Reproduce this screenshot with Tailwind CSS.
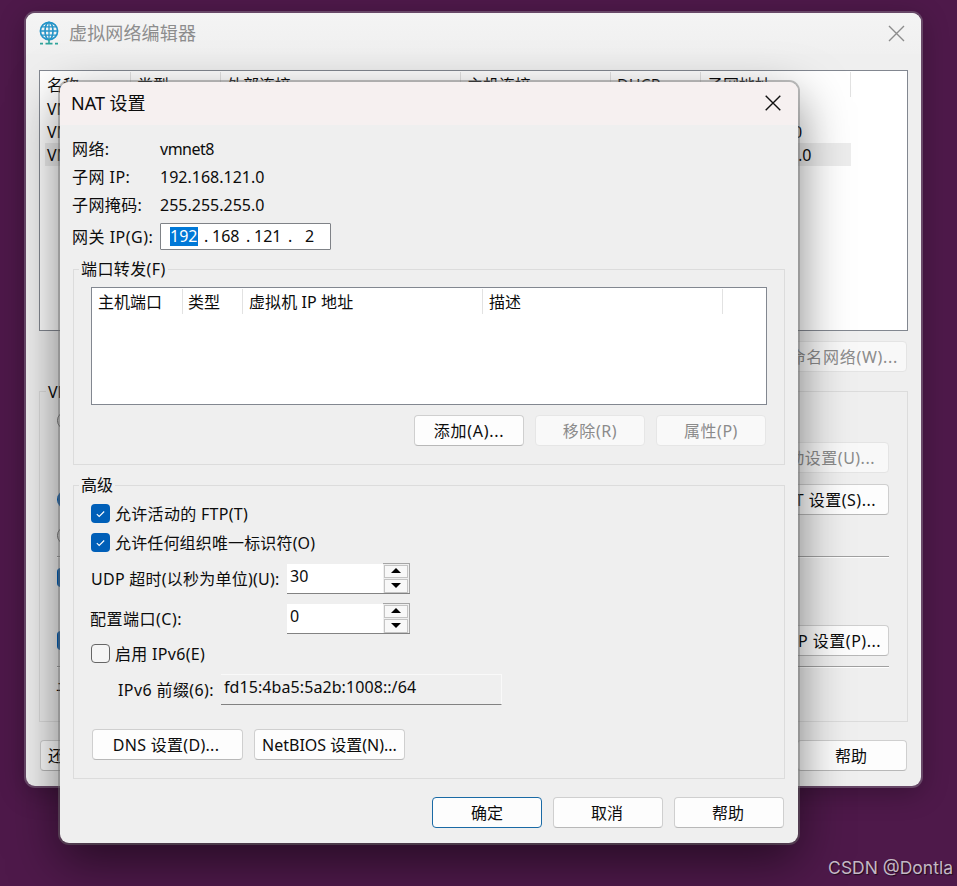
<!DOCTYPE html>
<html lang="zh-CN">
<head>
<meta charset="utf-8">
<title>虚拟网络编辑器</title>
<script src="https://cdn.jsdelivr.net/npm/@tailwindcss/browser@4"></script>
</head>
<body class="relative h-[886px] w-[957px] overflow-hidden bg-[#4e194a] font-['Noto_Sans','Noto_Sans_CJK_SC',sans-serif] text-[16px] leading-[20px] whitespace-nowrap text-[#0c0c0c]">

<!-- Editor window -->
<div class="absolute left-[26px] top-[13px] flex h-[773px] w-[895px] flex-col overflow-hidden rounded-[9px] bg-[#efefef] shadow-[0_0_0_2px_#684868,0_6px_28px_rgba(0,0,0,0.3)]">
  <header class="flex h-[41px] items-center bg-linear-to-b from-[#f4f4f4] to-[#f0f0f0] pl-[13px] pr-[16px]">
    <svg class="-mt-[2px] h-[24px] w-[20px] shrink-0" viewBox="0 0 20 24" fill="none" stroke="#2494c8" stroke-width="1.7">
      <circle cx="10" cy="10" r="8.6"/>
      <ellipse cx="10" cy="10" rx="4" ry="8.6"/>
      <path d="M10 1.8v16.4M1.8 10h16.4M3 5.8h14M3 14.2h14" stroke-width="1.3"/>
      <path d="M10 18v4M6.5 22.6h7M1 22.6h3M16 22.6h3" stroke="#2fa39a" stroke-width="1.6"/>
    </svg>
    <h1 class="ml-[10px] -mt-px text-[18px] tracking-[0.15px] text-[#8d8d8d]">虚拟网络编辑器</h1>
    <svg class="ml-auto h-[17px] w-[17px]" viewBox="0 0 17 17" stroke="#8c8c8c" stroke-width="1.4"><path d="M1 1l15 15M16 1L1 16"/></svg>
  </header>

  <div class="ml-[13px] mt-[16px] h-[261px] w-[869px] border border-[#828790] bg-white pt-px">
    <div class="flex h-[25px] leading-[26px]">
      <div class="w-[91px] border-r border-[#e2e2e2] pl-[7px]">名称</div>
      <div class="w-[90px] border-r border-[#e2e2e2] pl-[6px]">类型</div>
      <div class="w-[240px] border-r border-[#e2e2e2] pl-[6px]">外部连接</div>
      <div class="w-[150px] border-r border-[#e2e2e2] pl-[6px]">主机连接</div>
      <div class="w-[90px] border-r border-[#e2e2e2] pl-[6px]">DHCP</div>
      <div class="w-[150px] border-r border-[#e2e2e2] pl-[6px]">子网地址</div>
    </div>
    <div class="ml-[5px] w-[806px] leading-[25px]">
      <div class="flex h-[23px] pl-[2px]"><span class="w-[660px]">VMnet0</span><span>-</span></div>
      <div class="flex h-[23px] pl-[2px]"><span class="w-[660px]">VMnet1</span><span>192.168.80.0</span></div>
      <div class="flex h-[23px] bg-[#ededed] pl-[2px]"><span class="w-[660px]">VMnet8</span><span>192.168.121.0</span></div>
    </div>
  </div>

  <div class="mt-[10px] flex justify-end pr-[14px]">
    <button class="h-[31px] w-[151px] rounded-[4px] border border-[#e4e4e4] bg-[#f8f8f8] pl-[8px] tracking-[0.7px] text-[#8b8b8b]">重命名网络(W)...</button>
  </div>

  <fieldset class="ml-[13px] mt-[9px] h-[341px] w-[869px] border border-[#dcdcdc] pl-[17px] pr-[18px]">
    <legend class="-ml-[11px] h-[20px] px-[2px] leading-[22px]">VMnet 信息</legend>
    <div class="mt-[10px] flex h-[19px] items-center gap-1"><i class="h-[19px] w-[19px] rounded-full border border-[#757575] bg-[#f3f3f3]"></i>桥接模式</div>
    <div class="mt-[12px] flex justify-end"><button class="h-[31px] w-[151px] rounded-[4px] border border-[#e4e4e4] bg-[#f8f8f8] pr-[13px] text-right tracking-[0.5px] text-[#8b8b8b]">自动设置(U)...</button></div>
    <div class="mt-[11px] flex h-[31px] items-center gap-1"><i class="h-[19px] w-[19px] rounded-full border-[5px] border-[#005fb8] bg-white"></i>NAT 模式
      <button class="ml-auto h-[31px] w-[151px] rounded-[4px] border border-[#cfcfcf] border-b-[#b8b8b8] bg-[#fdfdfd] pr-[12px] text-right tracking-[0.5px]">NAT 设置(S)...</button></div>
    <div class="mt-[11px] flex h-[19px] items-center gap-1"><i class="h-[19px] w-[19px] rounded-full border border-[#757575] bg-[#f3f3f3]"></i>仅主机模式</div>
    <div class="mt-[11px] h-[2px] border-t border-b border-t-[#a0a0a0] border-b-white"></div>
    <div class="mt-[10px] flex h-[19px] items-center gap-1"><i class="h-[19px] w-[19px] rounded-[4px] bg-[#005fb8]"></i>将主机虚拟适配器连接到此网络</div>
    <div class="mt-[38px] flex h-[31px] items-center gap-1"><i class="h-[19px] w-[19px] rounded-[4px] bg-[#005fb8]"></i>使用本地 DHCP 服务
      <button class="ml-auto h-[31px] w-[151px] rounded-[4px] border border-[#cfcfcf] border-b-[#b8b8b8] bg-[#fdfdfd] pr-[7px] text-right tracking-[0.5px]">DHCP 设置(P)...</button></div>
    <div class="mt-[10px] h-[2px] border-t border-b border-t-[#a0a0a0] border-b-white"></div>
    <div class="-ml-px mt-[12px]">子网 IP</div>
  </fieldset>

  <div class="mt-[18px] flex justify-between pl-[14px] pr-[14px]">
    <button class="h-[31px] w-[130px] rounded-[4px] border border-[#cfcfcf] border-b-[#b8b8b8] bg-[#fdfdfd] pl-[7px] text-left">还原默认设置(R)</button>
    <button class="h-[31px] w-[110px] rounded-[4px] border border-[#cfcfcf] border-b-[#b8b8b8] bg-[#fdfdfd] pr-[2px]">帮助</button>
  </div>
</div>

<!-- NAT dialog -->
<div class="absolute left-[60px] top-[82px] flex h-[761px] w-[738px] flex-col rounded-[9px] bg-[#efefef] shadow-[0_0_0_2px_rgba(110,110,110,0.45),0_18px_50px_rgba(0,0,0,0.52)]">
  <header class="flex h-[43px] items-center rounded-t-[9px] bg-[#f6f0f0] pb-[2px] pl-[11px] pr-[17px]">
    <h2 class="text-[18px]">NAT 设置</h2>
    <svg class="ml-auto h-[16px] w-[16px]" viewBox="0 0 16 16" stroke="#111" stroke-width="1.4"><path d="M.7.7l14.6 14.6M15.3.7L.7 15.3"/></svg>
  </header>

  <dl class="mt-[10px] grid grid-cols-[88px_auto] pl-[12px] leading-[28px]">
    <dt class="tracking-[0.4px]">网络:</dt><dd class="tracking-[-0.5px]">vmnet8</dd>
    <dt class="tracking-[0.45px]">子网 IP:</dt><dd>192.168.121.0</dd>
    <dt class="tracking-[0.4px]">子网掩码:</dt><dd>255.255.255.0</dd>
  </dl>
  <div class="mt-[4px] flex pl-[12px]">
    <span class="w-[88px] leading-[28px] tracking-[0.5px]">网关 IP(G):</span>
    <div class="flex h-[27px] w-[171px] items-center rounded-[1px] border border-[#7f8287] bg-white pb-px pl-[9px]">
      <span class="h-[19px] w-[28px] bg-[#0078d7] leading-[19px] text-white">192</span>
      <span class="w-[14px] pl-[6px]">.</span><span class="w-[29px]">168</span>
      <span class="w-[13px] pl-[5px]">.</span><span class="w-[29px]">121</span>
      <span class="w-[22px] pl-[5px]">.</span><span>2</span>
    </div>
  </div>

  <fieldset class="ml-[13px] mt-[8px] h-[206px] w-[712px] border border-[#dcdcdc] pl-[17px] pr-[17px]">
    <legend class="-ml-[12px] h-[20px] px-[2px] tracking-[0.4px]">端口转发(F)</legend>
    <div class="mt-[8px] h-[118px] w-[676px] border border-[#828790] bg-white pt-px">
      <div class="flex h-[25px] leading-[26px]">
        <div class="w-[91px] border-r border-[#e2e2e2] pl-[6px]">主机端口</div>
        <div class="w-[60px] border-r border-[#e2e2e2] pl-[5px]">类型</div>
        <div class="w-[240px] border-r border-[#e2e2e2] pl-[6px] tracking-[0.1px]">虚拟机 IP 地址</div>
        <div class="w-[240px] border-r border-[#e2e2e2] pl-[6px]">描述</div>
      </div>
    </div>
    <div class="mt-[10px] flex justify-end gap-[11px] pr-px">
      <button class="h-[31px] w-[110px] rounded-[4px] border border-[#cfcfcf] border-b-[#b8b8b8] bg-[#fdfdfd] tracking-[0.7px]">添加(A)...</button>
      <button class="h-[31px] w-[110px] rounded-[4px] border border-[#e6e6e6] bg-[#f9f9f9] tracking-[0.6px] text-[#8b8b8b]">移除(R)</button>
      <button class="h-[31px] w-[110px] rounded-[4px] border border-[#e6e6e6] bg-[#f9f9f9] tracking-[0.5px] text-[#8b8b8b]">属性(P)</button>
    </div>
  </fieldset>

  <fieldset class="ml-[13px] mt-[10px] h-[304px] w-[712px] border border-[#dcdcdc] pl-[17px]">
    <legend class="-ml-[12px] h-[20px] px-[2px]">高级</legend>
    <div class="mt-[9px] flex h-[19px] items-center gap-[5px] tracking-[0.3px]">
      <svg class="h-[19px] w-[19px] rounded-[4px] bg-[#005fb8]" viewBox="0 0 19 19" fill="none" stroke="#fff" stroke-width="1.1"><path d="M5.8 10.2l2.4 2.3L13.2 7.5"/></svg>允许活动的 FTP(T)
    </div>
    <div class="mt-[10px] flex h-[19px] items-center gap-[5px] tracking-[0.15px]">
      <svg class="h-[19px] w-[19px] rounded-[4px] bg-[#005fb8]" viewBox="0 0 19 19" fill="none" stroke="#fff" stroke-width="1.1"><path d="M5.8 10.2l2.4 2.3L13.2 7.5"/></svg>允许任何组织唯一标识符(O)
    </div>
    <div class="mt-[11px] flex h-[31px]">
      <span class="w-[196px] leading-[32px] tracking-[0.25px]">UDP 超时(以秒为单位)(U):</span>
      <div class="flex h-[31px] w-[123px] border-b border-[#828282] bg-white">
        <span class="w-[96px] border-t border-[#efefef] pl-[3px] leading-[25px]">30</span>
        <div class="flex w-[27px] flex-col gap-[1px] border-t border-r border-[#a5a5a5] bg-[#efefef] pt-px pl-px pr-px">
          <i class="flex flex-1 justify-center border border-[#c4c4c4] bg-[#f8f8f8] pt-[2px]"><svg class="h-[5px] w-[10px]" viewBox="0 0 10 5"><path d="M0 5L5 0l5 5z"/></svg></i>
          <i class="flex flex-1 justify-center border border-[#c4c4c4] bg-[#f8f8f8] pt-[3px]"><svg class="h-[5px] w-[10px]" viewBox="0 0 10 5"><path d="M0 0l5 5 5-5z"/></svg></i>
        </div>
      </div>
    </div>
    <div class="mt-[9px] flex h-[31px]">
      <span class="-ml-px w-[197px] leading-[32px] tracking-[0.5px]">配置端口(C):</span>
      <div class="flex h-[31px] w-[123px] border-b border-[#828282] bg-white">
        <span class="w-[96px] border-t border-[#efefef] pl-[3px] leading-[25px]">0</span>
        <div class="flex w-[27px] flex-col gap-[1px] border-t border-r border-[#a5a5a5] bg-[#efefef] pt-px pl-px pr-px">
          <i class="flex flex-1 justify-center border border-[#c4c4c4] bg-[#f8f8f8] pt-[2px]"><svg class="h-[5px] w-[10px]" viewBox="0 0 10 5"><path d="M0 5L5 0l5 5z"/></svg></i>
          <i class="flex flex-1 justify-center border border-[#c4c4c4] bg-[#f8f8f8] pt-[3px]"><svg class="h-[5px] w-[10px]" viewBox="0 0 10 5"><path d="M0 0l5 5 5-5z"/></svg></i>
        </div>
      </div>
    </div>
    <div class="mt-[10px] flex h-[19px] items-center gap-[5px] tracking-[0.3px]">
      <i class="h-[19px] w-[19px] rounded-[4px] border border-[#666] bg-[#f5f5f5]"></i>启用 IPv6(E)
    </div>
    <div class="mt-[11px] flex h-[31px] pl-[27px]">
      <span class="w-[103px] leading-[32px] tracking-[0.4px]">IPv6 前缀(6):</span>
      <div class="h-[31px] w-[281px] border-t border-r border-b border-[#f9f9f9] border-b-[#828282] pl-[3px] leading-[25px] tracking-[0.08px]">fd15:4ba5:5a2b:1008::/64</div>
    </div>
    <div class="mt-[24px] flex gap-[11px] pl-px">
      <button class="h-[31px] w-[151px] rounded-[4px] border border-[#cfcfcf] border-b-[#b8b8b8] bg-[#fdfdfd] pr-[3px] tracking-[0.3px]">DNS 设置(D)...</button>
      <button class="h-[31px] w-[151px] rounded-[4px] border border-[#cfcfcf] border-b-[#b8b8b8] bg-[#fdfdfd]">NetBIOS 设置(N)...</button>
    </div>
  </fieldset>

  <footer class="mt-[18px] flex justify-end gap-[11px] pr-[14px]">
    <button class="h-[31px] w-[110px] rounded-[4px] border border-[#1a6aa5] bg-[#fdfdfd]">确定</button>
    <button class="h-[31px] w-[110px] rounded-[4px] border border-[#cfcfcf] border-b-[#b8b8b8] bg-[#fdfdfd] pr-[2px]">取消</button>
    <button class="h-[31px] w-[110px] rounded-[4px] border border-[#cfcfcf] border-b-[#b8b8b8] bg-[#fdfdfd] pr-[2px]">帮助</button>
  </footer>
</div>

<div class="absolute right-[4px] bottom-[8px] font-['Inter','Noto_Sans',sans-serif] text-[17.5px] text-[#c4b8c4] [text-shadow:1px_1px_1px_rgba(0,0,0,0.6)]">CSDN @Dontla</div>
</body>
</html>
